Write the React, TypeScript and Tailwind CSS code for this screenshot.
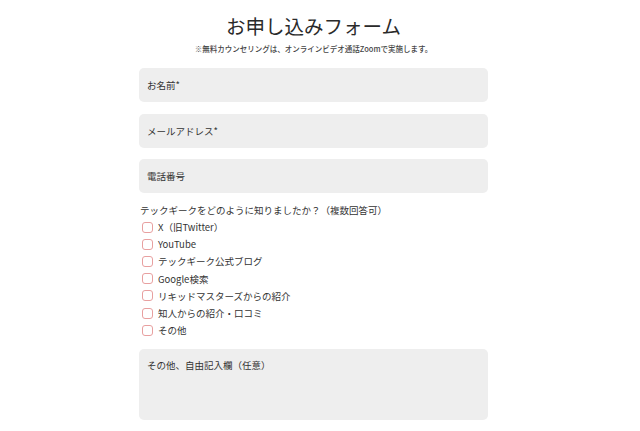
import React from 'react';

const sources = [
  'X（旧Twitter）',
  'YouTube',
  'テックギーク公式ブログ',
  'Google検索',
  'リキッドマスターズからの紹介',
  '知人からの紹介・口コミ',
  'その他',
];

export default function App() {
  return (
    <div className="w-[640px] h-[431px] bg-white text-[#333] font-['Noto_Sans_CJK_JP',sans-serif]">
      <form className="ml-[139px] w-[349px] pt-[13px]">
        <h1 className="text-center text-[19.5px] leading-[26px] text-[#2a2a2a]">お申し込みフォーム</h1>
        <p className="mt-[5px] text-center text-[7.5px] leading-[10px] font-medium text-[#444]">
          ※無料カウンセリングは、オンラインビデオ通話Zoomで実施します。
        </p>

        <div className="mt-[14px] flex flex-col gap-[11.5px]">
          <input
            type="text"
            placeholder="お名前*"
            className="h-[34px] w-full rounded-[5px] bg-[#eeeeee] px-[8px] text-[9.5px] outline-none placeholder:text-[#333]"
          />
          <input
            type="email"
            placeholder="メールアドレス*"
            className="h-[34px] w-full rounded-[5px] bg-[#eeeeee] px-[8px] text-[9.5px] outline-none placeholder:text-[#333]"
          />
          <input
            type="tel"
            placeholder="電話番号"
            className="h-[34px] w-full rounded-[5px] bg-[#eeeeee] px-[8px] text-[9.5px] outline-none placeholder:text-[#333]"
          />
        </div>

        <fieldset className="mt-[9.5px]">
          <legend className="pl-[1px] text-[9.5px] leading-[14px]">
            テックギークをどのように知りましたか？（複数回答可）
          </legend>
          <div className="mt-[2px] flex flex-col">
            {sources.map((s) => (
              <label key={s} className="flex h-[17.2px] items-center gap-[5px] pl-[3px] text-[9.5px]">
                <span className="h-[11px] w-[11px] rounded-[3px] border border-[#e8a0a0] bg-white" />
                <span>{s}</span>
              </label>
            ))}
          </div>
        </fieldset>

        <textarea
          placeholder="その他、自由記入欄（任意）"
          className="mt-[10px] block h-[71px] w-full resize-none rounded-[5px] bg-[#eeeeee] px-[8px] pt-[9px] text-[9.5px] outline-none placeholder:text-[#333]"
        />
      </form>
    </div>
  );
}
